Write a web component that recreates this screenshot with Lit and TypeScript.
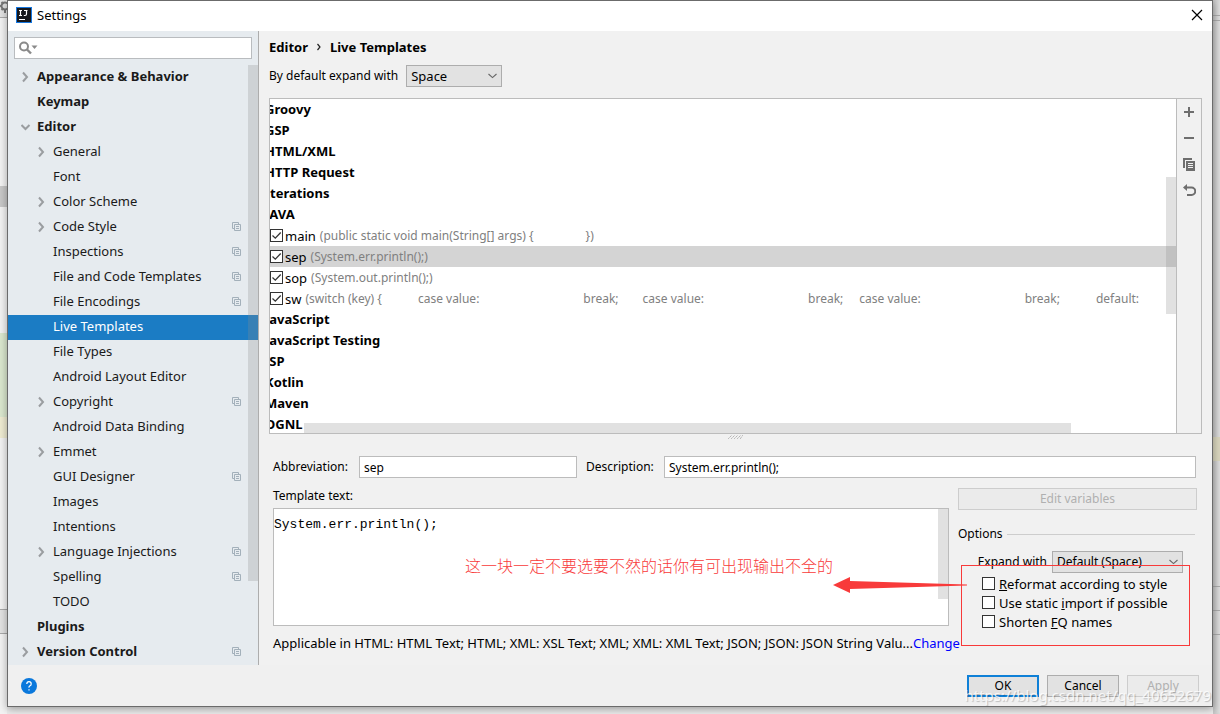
import { LitElement, html, css, nothing } from "lit";
import { customElement, state } from "lit/decorators.js";
import { classMap } from "lit/directives/class-map.js";

interface TreeItem {
  label: string;
  level: 0 | 1;
  arrow?: "closed" | "open";
  project?: boolean;
}

const TREE: TreeItem[] = [
  { label: "Appearance & Behavior", level: 0, arrow: "closed" },
  { label: "Keymap", level: 0 },
  { label: "Editor", level: 0, arrow: "open" },
  { label: "General", level: 1, arrow: "closed" },
  { label: "Font", level: 1 },
  { label: "Color Scheme", level: 1, arrow: "closed" },
  { label: "Code Style", level: 1, arrow: "closed", project: true },
  { label: "Inspections", level: 1, project: true },
  { label: "File and Code Templates", level: 1, project: true },
  { label: "File Encodings", level: 1, project: true },
  { label: "Live Templates", level: 1 },
  { label: "File Types", level: 1 },
  { label: "Android Layout Editor", level: 1 },
  { label: "Copyright", level: 1, arrow: "closed", project: true },
  { label: "Android Data Binding", level: 1 },
  { label: "Emmet", level: 1, arrow: "closed" },
  { label: "GUI Designer", level: 1, project: true },
  { label: "Images", level: 1 },
  { label: "Intentions", level: 1 },
  { label: "Language Injections", level: 1, arrow: "closed", project: true },
  { label: "Spelling", level: 1, project: true },
  { label: "TODO", level: 1 },
  { label: "Plugins", level: 0 },
  { label: "Version Control", level: 0, arrow: "closed", project: true },
];

/* A template's preview text: strings are drawn, numbers are runs of blanks. */
interface TemplateRow {
  name: string;
  preview?: (string | number)[];
}

const ROWS: TemplateRow[] = [
  { name: "Groovy" },
  { name: "GSP" },
  { name: "HTML/XML" },
  { name: "HTTP Request" },
  { name: "Iterations" },
  { name: "JAVA" },
  { name: "main", preview: ["(public static void main(String[] args) {", 13, "})"] },
  { name: "sep", preview: ["(System.err.println();)"] },
  { name: "sop", preview: ["(System.out.println();)"] },
  {
    name: "sw",
    preview: [
      "(switch (key) {", 9, "case value:", 26, "break;", 6, "case value:", 26,
      "break;", 4, "case value:", 26, "break;", 9, "default:",
    ],
  },
  { name: "JavaScript" },
  { name: "JavaScript Testing" },
  { name: "JSP" },
  { name: "Kotlin" },
  { name: "Maven" },
  { name: "OGNL" },
];

const BLANK = 4;

@customElement("app-root")
export class AppRoot extends LitElement {
  @state() private page = "Live Templates";
  @state() private template = "sep";

  static styles = css`
    :host {
      display: grid;
      grid-template-columns: 7px minmax(0, 1fr) 7px;
      min-height: 100vh;
      box-sizing: border-box;
      background: #ececec;
      color: #000;
      font: 13px/18px "Noto Sans", "Noto Sans CJK SC", sans-serif;
      overflow: hidden;
    }
    * { box-sizing: border-box; }
    input, select, button, textarea { font: inherit; color: inherit; margin: 0; border-radius: 0; }
    button { padding: 0; }
    svg { display: block; flex: none; }

    .gutter { display: flex; flex-direction: column; overflow: hidden; background: #f3f3f3; }
    .gutter.right { background: #e0e0e0; box-shadow: inset 6px 0 5px -2px #c4c4c4; }
    .band { flex: none; }
    .h16 { height: 16px; } .h18 { height: 18px; } .h21 { height: 21px; }
    .h24 { height: 24px; } .h84 { height: 84px; } .h126 { height: 126px; }
    .h168 { height: 168px; } .h172 { height: 172px; } .h416 { height: 416px; } .h5 { height: 5px; }
    .line { border-bottom: 1px solid #a9a9a9; }
    .grey { background: #c8c8c8; }
    .green { background: #dbe8cf; }
    .cream { background: #efecd2; }
    .sand { background: #d9d5bd; }
    .panel { background: #e3e3e3; }
    .gear { width: 7px; height: 17px; }

    .dialog {
      display: flex;
      flex-direction: column;
      margin-bottom: 7px;
      border: 1px solid #6b6b6b;
      background: #f1f1f1;
      box-shadow: 0 2px 8px rgba(0, 0, 0, 0.35);
      position: relative;
    }
    .titlebar {
      display: flex; align-items: center; gap: 5px;
      height: 30px; padding: 0 9px 2px 8px; background: #fff;
    }
    .titlebar h1 { margin: 0; font-size: 13px; font-weight: 400; flex: 1; }
    .close { border: 0; background: none; }

    .body { display: grid; grid-template-columns: 251px minmax(0, 1fr); flex: 1; }

    .sidebar { background: #e6ebef; border-right: 1px solid #adadad; display: flex; flex-direction: column; }
    .search {
      display: flex; align-items: center; gap: 4px;
      height: 22px; margin: 6px; padding: 0 4px;
      border: 1px solid #b9bcbf; background: #fff;
    }
    .search input { border: 0; outline: 0; background: none; padding: 0; flex: 1; min-width: 0; }
    .treewrap { position: relative; }
    .tree { list-style: none; margin: 0; padding: 0; }
    .item {
      display: flex; align-items: center; height: 25px; padding: 0 17px 3px 13px;
      color: #1a1a1a; text-decoration: none; white-space: nowrap;
    }
    .item.top { font-weight: 700; }
    .item.sub { padding-left: 29px; }
    .item.on { background: #1b7cc4; color: #fff; }
    .item .mark { width: 16px; flex: none; }
    .item .text { flex: 1; }
    .thumb { position: absolute; background: rgba(140, 140, 140, 0.26); }
    .thumb.tree-thumb { right: 0; top: 0; width: 10px; height: 86%; }

    .main { display: flex; flex-direction: column; padding: 7px 10px 0; min-width: 0; font-size: 12px; }
    .crumbs { display: flex; align-items: center; gap: 8px; height: 18px; font-weight: 700; font-size: 13px; }
    .expand { display: flex; align-items: center; gap: 8px; height: 22px; margin-top: 9px; }
    select {
      appearance: none; height: 22px; padding: 0 4px; border: 1px solid #adadad; outline: 0;
      background: #e2e2e2 url("data:image/svg+xml,%3Csvg xmlns='http://www.w3.org/2000/svg' width='9' height='6'%3E%3Cpath d='M.5 1l4 3.6L8.500 1' fill='none' stroke='%23666' stroke-width='1.1'/%3E%3C/svg%3E") no-repeat right 4px center;
    }
    .expand select { width: 96px; font-size: 13px; }

    .listbox {
      display: grid; grid-template-columns: minmax(0, 1fr) 25px;
      height: 336px; margin-top: 11px; border: 1px solid #bcbcbc;
    }
    .rows { position: relative; overflow: hidden; background: #fff; margin: 0; padding: 0; list-style: none; }
    .row { display: flex; align-items: center; height: 21px; white-space: nowrap; }
    .row.group { font-weight: 700; font-size: 13px; margin-left: -5px; padding-bottom: 1px; }
    .row.on { background: #d4d4d4; }
    .row label { display: flex; align-items: center; gap: 2px; font-size: 13px; }
    .preview { display: flex; color: #808080; margin-left: 4px; }
    .thumb.rows-v { right: 0; top: 78px; width: 10px; height: 137px; }
    .thumb.rows-h { left: 34px; right: 105px; bottom: 0; height: 10px; }
    .tools { display: flex; flex-direction: column; align-items: center; border-left: 1px solid #bcbcbc; }
    .tools button { width: 24px; height: 26px; border: 0; background: none; display: grid; place-items: center; }

    input[type="checkbox"] {
      appearance: none; flex: none; width: 13px; height: 13px; border: 1px solid #333; background: #fff; outline: 0;
    }
    input[type="checkbox"]:checked {
      background: #fff url("data:image/svg+xml,%3Csvg xmlns='http://www.w3.org/2000/svg' width='11' height='11'%3E%3Cpath d='M1.500 5.500l2.800 2.700L9.700 2.500' fill='none' stroke='%23333' stroke-width='1.300'/%3E%3C/svg%3E") center no-repeat;
    }

    .grip { display: flex; justify-content: center; height: 22px; padding-top: 1px; }
    .fields { display: grid; grid-template-columns: 77px 218px 69px minmax(0, 1fr); align-items: center; column-gap: 9px; padding: 0 6px 0 4px; }
    .fields input { height: 22px; width: 100%; min-width: 0; border: 1px solid #bcbcbc; padding: 0 4px; outline: 0; background: #fff; }

    .detail { display: grid; grid-template-columns: minmax(0, 1fr) 239px; column-gap: 9px; padding: 9px 5px 0 4px; }
    .left { display: flex; flex-direction: column; min-width: 0; }
    .editor { position: relative; height: 118px; margin-top: 3px; border: 1px solid #bcbcbc; background: #fff; }
    .editor textarea {
      display: block; width: 100%; height: 100%; border: 0; outline: 0; resize: none; overflow: hidden;
      padding: 7px 0; background: none; font: 13px/18px "Liberation Mono", monospace;
    }
    .thumb.ed { right: 0; top: 0; width: 10px; height: 90px; }
    .applicable { display: flex; height: 18px; margin-top: 8px; white-space: nowrap; font-size: 13px; }
    .applicable a { color: #00f; text-decoration: none; }

    .side { position: relative; }
    button.push { height: 22px; width: 72px; border: 1px solid #adadad; background: #e2e2e2; }
    button.push.wide { width: 100%; margin-top: 1px; }
    button.push:disabled { border-color: #cdcdcd; background: #ebebeb; color: #b0b0b0; }
    button.push.primary { border: 2px solid #0f80d7; }
    fieldset { border: 0; margin: 0; padding: 0; min-width: 0; }
    .legend { display: flex; align-items: center; gap: 4px; margin-top: 15px; padding-right: 2px; }
    .legend::after { content: ""; flex: 1; height: 1px; background: #cdcdcd; }
    .with { display: flex; align-items: center; justify-content: flex-end; gap: 5px; margin-top: 8px; padding-right: 14px; }
    .with select { width: 131px; }
    .checks { display: flex; flex-direction: column; margin-top: 1px; padding-left: 24px; font-size: 13px; }
    .checks label { display: flex; align-items: center; gap: 4px; height: 19px; }

    .note-box { position: absolute; left: 3px; top: 78px; width: 229px; height: 81px; border: 1px solid #f83a3a; pointer-events: none; }
    .note-arrow { position: absolute; right: 230px; top: 89px; }
    .note-text {
      position: absolute; right: 364px; top: 66px; white-space: nowrap; color: #f83a3a;
      font: 300 16px/24px "Noto Sans CJK SC", sans-serif;
    }

    .footer { display: flex; align-items: center; gap: 8px; height: 41px; padding: 0 13px; background: #f0f0f0; font-size: 12px; }
    .help { border: 0; background: none; margin-right: auto; }
    .watermark {
      position: absolute; right: 1px; bottom: 0; pointer-events: none;
      font: 15px/22px "Noto Sans", sans-serif; color: rgba(255, 255, 255, 0.8);
      text-shadow: 1px 1px 1px rgba(0, 0, 0, 0.22);
    }
  `;

  private arrow(kind?: "closed" | "open") {
    if (!kind) return nothing;
    const d = kind === "closed" ? "M2 2.500l4 4.500-4 4.500" : "M0.500 5l4 4 4-4";
    return html`<svg width="10" height="13" viewBox="0 0 10 13">
      <path d=${d} fill="none" stroke="#9a9da0" stroke-width="2" />
    </svg>`;
  }

  private projectIcon() {
    return html`<svg width="9" height="9" viewBox="0 0 9 9" fill="none" stroke="#a3b0ba">
      <path d="M2 6.500H.5V.5h6V2M2.500 2.500h6v6h-6zM4 4.500h3M4 6.500h3" />
    </svg>`;
  }

  private treeItem(item: TreeItem) {
    const cls = {
      item: true,
      top: item.level === 0,
      sub: item.level === 1,
      on: item.label === this.page,
    };
    return html`<li>
      <a class=${classMap(cls)} href="#" @click=${(e: Event) => { e.preventDefault(); this.page = item.label; }}>
        <span class="mark">${this.arrow(item.arrow)}</span>
        <span class="text">${item.label}</span>
        ${item.project ? this.projectIcon() : nothing}
      </a>
    </li>`;
  }

  private templateRow(row: TemplateRow) {
    if (!row.preview) return html`<li class="row group">${row.name}</li>`;
    return html`<li
      class=${classMap({ row: true, on: row.name === this.template })}
      @click=${() => { this.template = row.name; }}
    >
      <label><input type="checkbox" checked />${row.name}</label>
      <span class="preview">${row.preview.map((part) =>
        typeof part === "number"
          ? html`<span style="width:${part * BLANK}px"></span>`
          : html`<span>${part}</span>`)}</span>
    </li>`;
  }

  render() {
    return html`
      <div class="gutter left-edge">
        <div class="band panel h18 line">
          <svg class="gear" viewBox="0 0 7 17" fill="none" stroke="#777">
            <circle cx="5" cy="6" r="3.500" stroke-width="2" />
            <path d="M0 6h2M1.500 2l2 2M1.500 10l2-2M5 10v3" stroke-width="2" />
          </svg>
        </div>
        <div class="band h168"></div>
        <div class="band grey h21"></div>
        <div class="band h126"></div>
        <div class="band green h84"></div>
        <div class="band cream h21"></div>
        <div class="band h172 line"></div>
        <div class="band panel h24 line"></div>
      </div>

      <div class="dialog" role="dialog" aria-label="Settings">
        <header class="titlebar">
          <svg width="16" height="16" viewBox="0 0 16 16">
            <rect x="0.500" y="0.500" width="15" height="15" fill="#15171c" stroke="#1677e0" />
            <path d="M3 3.500h3M4.500 3.500v5M3 8.500h3M8 3.500h3.500M10.500 3.500v3.500q0 1.500-1.500 1.500h-1.200M3 12.500h6" fill="none" stroke="#fff" stroke-width="1.200" />
          </svg>
          <h1>Settings</h1>
          <button class="close" aria-label="Close">
            <svg width="12" height="12" viewBox="0 0 12 12"><path d="M1 1l10 10M11 1L1 11" stroke="#000" stroke-width="1.200" /></svg>
          </button>
        </header>

        <div class="body">
          <nav class="sidebar">
            <div class="search">
              <svg width="19" height="14" viewBox="0 0 19 14">
                <circle cx="5" cy="5.500" r="4" fill="none" stroke="#8a8a8a" stroke-width="2" />
                <path d="M8 8.500l4 4" stroke="#8a8a8a" stroke-width="2.400" />
                <path d="M12.500 4.500h6l-3 3.500z" fill="#8a8a8a" />
              </svg>
              <input type="text" aria-label="Search settings" />
            </div>
            <div class="treewrap">
              <ul class="tree">${TREE.map((item) => this.treeItem(item))}</ul>
              <div class="thumb tree-thumb"></div>
            </div>
          </nav>

          <main class="main">
            <div class="crumbs">
              <span>Editor</span>
              <svg width="6" height="8" viewBox="0 0 6 8"><path d="M1.500 1l2.500 3-2.500 3" fill="none" stroke="#222" stroke-width="1.200" /></svg>
              <span>Live Templates</span>
            </div>
            <div class="expand">
              <label for="expand">By default expand with</label>
              <select id="expand"><option>Space</option></select>
            </div>

            <div class="listbox">
              <ul class="rows">
                ${ROWS.map((row) => this.templateRow(row))}
                <li class="thumb rows-v" role="presentation"></li>
                <li class="thumb rows-h" role="presentation"></li>
              </ul>
              <div class="tools">
                <button aria-label="Add"><svg width="12" height="12" viewBox="0 0 12 12"><path d="M1 6h10M6 1v10" stroke="#6e6e6e" stroke-width="2" /></svg></button>
                <button aria-label="Remove"><svg width="12" height="12" viewBox="0 0 12 12"><path d="M1 6h10" stroke="#6e6e6e" stroke-width="2" /></svg></button>
                <button aria-label="Duplicate"><svg width="12" height="13" viewBox="0 0 12 13">
                  <path d="M1 10V1h8" fill="none" stroke="#6e6e6e" stroke-width="2" />
                  <path d="M3 3h9v10H3z" fill="#6e6e6e" />
                  <path d="M5 5.500h5M5 7.500h5M5 9.500h5" stroke="#f1f1f1" />
                </svg></button>
                <button aria-label="Restore"><svg width="13" height="13" viewBox="0 0 13 13">
                  <path d="M3 3.500h5.500a3.500 3.500 0 0 1 0 7.500H4" fill="none" stroke="#6e6e6e" stroke-width="2" />
                  <path d="M0 3.500L4 0v7z" fill="#6e6e6e" />
                </svg></button>
              </div>
            </div>

            <div class="grip">
              <svg width="15" height="4" viewBox="0 0 15 4"><path d="M0.500 3.500l3-3M3.500 3.500l3-3M6.500 3.500l3-3M9.500 3.500l3-3M12.500 3.500l2-3" stroke="#888" stroke-dasharray="1.200 1.500" /></svg>
            </div>

            <div class="fields">
              <label for="abbr">Abbreviation:</label>
              <input id="abbr" type="text" value="sep" />
              <label for="desc">Description:</label>
              <input id="desc" type="text" value="System.err.println();" />
            </div>

            <div class="detail">
              <div class="left">
                <label for="text">Template text:</label>
                <div class="editor">
                  <textarea id="text" spellcheck="false" .value=${"System.err.println();"}></textarea>
                  <div class="thumb ed"></div>
                </div>
                <div class="applicable">
                  <span>Applicable in HTML: HTML Text; HTML; XML: XSL Text; XML; XML: XML Text; JSON; JSON: JSON String Valu...</span>
                  <a href="#">Change</a>
                </div>
              </div>

              <div class="side">
                <button class="push wide" disabled>Edit variables</button>
                <fieldset aria-label="Options">
                  <div class="legend">Options</div>
                  <div class="with">
                    <label for="with">Expand with</label>
                    <select id="with"><option>Default (Space)</option></select>
                  </div>
                  <div class="checks">
                    <label><input type="checkbox" /><span><u>R</u>eformat according to style</span></label>
                    <label><input type="checkbox" /><span>Use static <u>i</u>mport if possible</span></label>
                    <label><input type="checkbox" /><span>Shorten <u>F</u>Q names</span></label>
                  </div>
                </fieldset>
                <div class="note-box"></div>
                <svg class="note-arrow" width="134" height="18" viewBox="0 0 134 18">
                  <path d="M0 9L17 1v4L134 8.500v1L17 13v4z" fill="#f83a3a" />
                </svg>
                <div class="note-text">这一块一定不要选要不然的话你有可出现输出不全的</div>
              </div>
            </div>
          </main>
        </div>

        <footer class="footer">
          <button class="help" aria-label="Help">
            <svg width="16" height="16" viewBox="0 0 16 16">
              <circle cx="8" cy="8" r="8" fill="#0a78dc" />
              <path d="M5.800 6q0-2.300 2.200-2.300T10.200 5.900q0 1.200-1.200 1.900T8 9.600M8 11.200v1.400" fill="none" stroke="#fff" stroke-width="1.200" />
            </svg>
          </button>
          <button class="push primary">OK</button>
          <button class="push">Cancel</button>
          <button class="push" disabled>Apply</button>
        </footer>
        <div class="watermark">https://blog.csdn.net/qq_40652679</div>
      </div>

      <div class="gutter right">
        <div class="band h16 line"></div>
        <div class="band h5 line"></div>
        <div class="band h416"></div>
        <div class="band sand h24"></div>
        <div class="band h126 line"></div>
        <div class="band h24 line"></div>
        <div class="band h24 line"></div>
      </div>
    `;
  }
}
